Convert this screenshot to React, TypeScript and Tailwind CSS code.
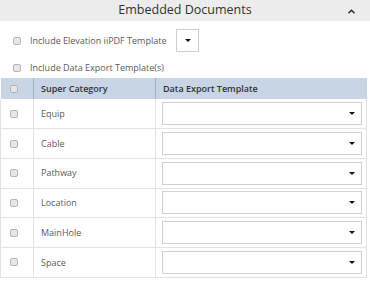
import React from 'react';

const rows = ['Equip', 'Cable', 'Pathway', 'Location', 'MainHole', 'Space'];

const Box = () => (
  <span className="inline-block h-[8px] w-[8px] rounded-[2px] border border-[#b5b5b5] bg-[#e6e6e6]" />
);

const Caret = () => (
  <span className="inline-block h-0 w-0 border-x-[3px] border-t-[3px] border-x-transparent border-t-[#111]" />
);

const Select = () => (
  <div className="flex h-[23px] w-[200px] items-center justify-end border border-[#cfcfcf] bg-white pr-[6px]">
    <Caret />
  </div>
);

export default function App() {
  return (
    <div className="h-[283px] w-[370px] bg-white font-['Open_Sans',sans-serif] text-[9px] text-[#5a5a5a]">
      {/* Section header */}
      <div className="relative flex h-[21px] items-center justify-center bg-[#ececec]">
        <span className="text-[12.5px] text-[#333]">Embedded Documents</span>
        <svg className="absolute right-[15px] top-[9px]" width="7" height="5" viewBox="0 0 7 5">
          <path d="M0.5 4.2 L3.5 1.2 L6.5 4.2" fill="none" stroke="#222" strokeWidth="1.4" />
        </svg>
      </div>

      <div className="mt-[8px] flex h-[23px] items-center pl-[13px]">
        <Box />
        <span className="ml-[9px]">Include Elevation iiPDF Template</span>
        <div className="ml-[10px] flex h-[23px] w-[23px] items-center justify-center border border-[#cfcfcf]">
          <Caret />
        </div>
      </div>

      <div className="mt-[11px] flex h-[10px] items-center pl-[13px]">
        <Box />
        <span className="ml-[9px]">Include Data Export Template(s)</span>
      </div>

      <table className="mt-[5px] w-[367px] border-collapse">
        <thead>
          <tr className="h-[21px] bg-[#c7d5e5] text-left text-[#333]">
            <th className="w-[33px] border-r border-[#9fb3c9] pl-[9px]"><span className="flex"><Box /></span></th>
            <th className="w-[122px] border-r border-[#9fb3c9] pl-[7px] font-semibold">Super Category</th>
            <th className="pl-[7px] font-semibold">Data Export Template</th>
          </tr>
        </thead>
        <tbody>
          {rows.map((r) => (
            <tr key={r} className="h-[29.7px] border-b border-[#e2e2e2]">
              <td className="border-x border-[#e2e2e2] pl-[9px]"><span className="flex"><Box /></span></td>
              <td className="border-r border-[#e2e2e2] pl-[7px]">{r}</td>
              <td className="border-r border-[#e2e2e2] pl-[6px]"><Select /></td>
            </tr>
          ))}
        </tbody>
      </table>
    </div>
  );
}
